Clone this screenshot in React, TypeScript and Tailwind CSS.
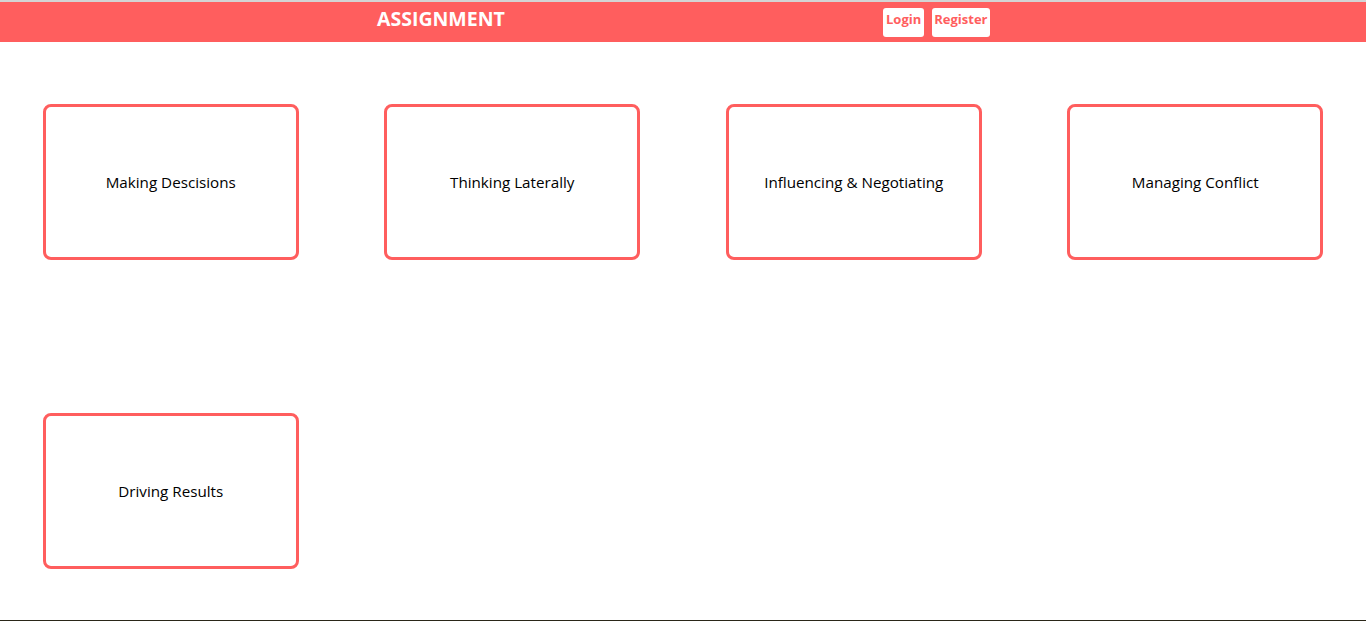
const skills = [
  'Making Descisions',
  'Thinking Laterally',
  'Influencing & Negotiating',
  'Managing Conflict',
  'Driving Results',
];

export default function App() {
  return (
    <div className="w-[1366px] h-[621px] bg-white flex flex-col font-['Open_Sans',sans-serif] border-b border-[#2a2618] overflow-hidden">
      <div className="h-[2px] bg-[#d4d4d4]" />
      <header className="h-[40px] bg-[#ff5e5e] flex items-start">
        <div className="w-[883px] pl-[377px] pt-[5px]">
          <h1 className="text-[19.5px] leading-[24px] font-bold text-white">ASSIGNMENT</h1>
        </div>
        <div className="flex gap-[8px] pt-[6px]">
          <button className="h-[29px] px-[3px] bg-white rounded-[3px] text-[13px] leading-[22px] font-bold text-[#ff5e5e] flex items-start">
            Login
          </button>
          <button className="h-[29px] px-[2px] bg-white rounded-[3px] text-[13px] leading-[22px] font-bold text-[#ff5e5e] flex items-start">
            Register
          </button>
        </div>
      </header>
      <main className="grid grid-cols-4 gap-y-[153px] pt-[62px]">
        {skills.map((s) => (
          <div key={s} className="flex justify-center">
            <div className="w-[256px] h-[156px] border-[3px] border-[#ff5e5e] rounded-[8px] flex items-center justify-center">
              <p className="text-[15.2px] text-black">{s}</p>
            </div>
          </div>
        ))}
      </main>
    </div>
  );
}
